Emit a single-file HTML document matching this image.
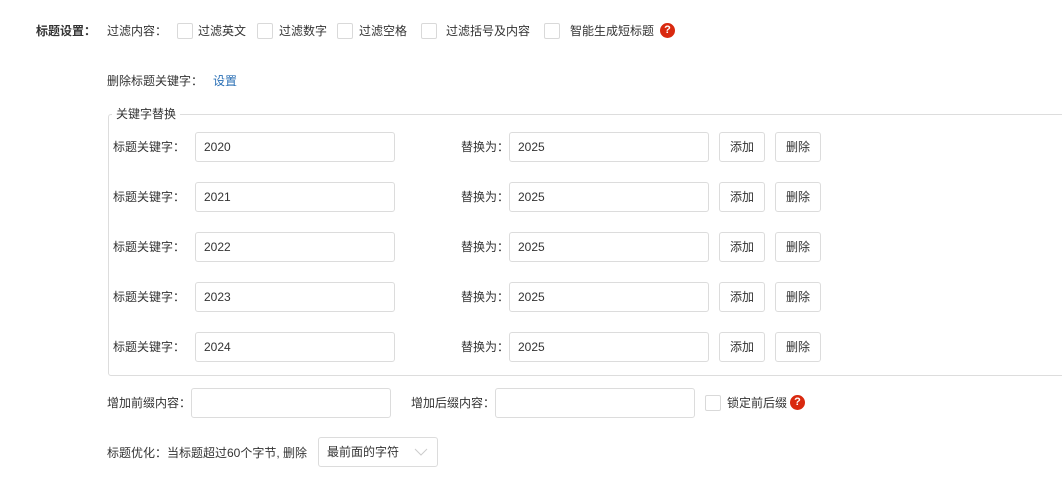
<!DOCTYPE html><html><head><meta charset="utf-8"><style>
body{margin:0;width:1062px;height:491px;background:#fff;font-family:"Liberation Sans","Noto Sans CJK SC",sans-serif;font-size:12px;color:#333;position:relative;overflow:hidden}
.a{position:absolute;white-space:nowrap;line-height:14px}
.cb{position:absolute;width:14px;height:14px;border:1px solid #d9d9d9;border-radius:2px;background:#fff}
.in{position:absolute;border:1px solid #dcdcdc;border-radius:3px;line-height:28px;padding-left:8px;box-sizing:border-box;width:200px;height:30px}
.bt{position:absolute;width:46px;height:30px;border:1px solid #dcdcdc;border-radius:3px;box-sizing:border-box;text-align:center;line-height:28px}
.h{position:absolute;width:15px;height:15px;border-radius:50%;background:#d9290f;color:#fff;font-weight:bold;font-size:11px;text-align:center;line-height:15px}
</style></head><body>
<div class="a" style="left:36px;top:24px;font-weight:bold">标题设置：</div>
<div class="a" style="left:107px;top:24px">过滤内容：</div>
<div class="cb" style="left:177px;top:23px"></div><div class="a" style="left:198px;top:24px">过滤英文</div>
<div class="cb" style="left:257px;top:23px"></div><div class="a" style="left:279px;top:24px">过滤数字</div>
<div class="cb" style="left:337px;top:23px"></div><div class="a" style="left:359px;top:24px">过滤空格</div>
<div class="cb" style="left:421px;top:23px"></div><div class="a" style="left:446px;top:24px">过滤括号及内容</div>
<div class="cb" style="left:544px;top:23px"></div><div class="a" style="left:570px;top:24px">智能生成短标题</div>
<div class="h" style="left:660px;top:23px">?</div>
<div class="a" style="left:107px;top:74px">删除标题关键字：</div>
<div class="a" style="left:213px;top:74px;color:#2a6fb5">设置</div>
<div style="position:absolute;left:108px;top:114px;width:960px;height:262px;border:1px solid #ddd;border-radius:3px;box-sizing:border-box"></div>
<div class="a" style="left:112px;top:107px;background:#fff;padding:0 4px">关键字替换</div>
<div class="a" style="left:113px;top:140px">标题关键字：</div><div class="in" style="left:195px;top:132px">2020</div><div class="a" style="left:461px;top:140px">替换为：</div><div class="in" style="left:509px;top:132px">2025</div><div class="bt" style="left:719px;top:132px">添加</div><div class="bt" style="left:775px;top:132px">删除</div>
<div class="a" style="left:113px;top:190px">标题关键字：</div><div class="in" style="left:195px;top:182px">2021</div><div class="a" style="left:461px;top:190px">替换为：</div><div class="in" style="left:509px;top:182px">2025</div><div class="bt" style="left:719px;top:182px">添加</div><div class="bt" style="left:775px;top:182px">删除</div>
<div class="a" style="left:113px;top:240px">标题关键字：</div><div class="in" style="left:195px;top:232px">2022</div><div class="a" style="left:461px;top:240px">替换为：</div><div class="in" style="left:509px;top:232px">2025</div><div class="bt" style="left:719px;top:232px">添加</div><div class="bt" style="left:775px;top:232px">删除</div>
<div class="a" style="left:113px;top:290px">标题关键字：</div><div class="in" style="left:195px;top:282px">2023</div><div class="a" style="left:461px;top:290px">替换为：</div><div class="in" style="left:509px;top:282px">2025</div><div class="bt" style="left:719px;top:282px">添加</div><div class="bt" style="left:775px;top:282px">删除</div>
<div class="a" style="left:113px;top:340px">标题关键字：</div><div class="in" style="left:195px;top:332px">2024</div><div class="a" style="left:461px;top:340px">替换为：</div><div class="in" style="left:509px;top:332px">2025</div><div class="bt" style="left:719px;top:332px">添加</div><div class="bt" style="left:775px;top:332px">删除</div>
<div class="a" style="left:107px;top:396px">增加前缀内容：</div><div class="in" style="left:191px;top:388px"></div>
<div class="a" style="left:411px;top:396px">增加后缀内容：</div><div class="in" style="left:495px;top:388px"></div>
<div class="cb" style="left:705px;top:395px"></div><div class="a" style="left:727px;top:396px">锁定前后缀</div>
<div class="h" style="left:790px;top:395px">?</div>
<div class="a" style="left:107px;top:446px">标题优化：当标题超过60个字节, 删除</div>
<div class="in" style="left:318px;top:437px;width:120px">最前面的字符</div>
<svg style="position:absolute;left:414px;top:448px" width="14" height="9"><path d="M1 1L7 7L13 1" fill="none" stroke="#ccc" stroke-width="1"/></svg>
</body></html>
